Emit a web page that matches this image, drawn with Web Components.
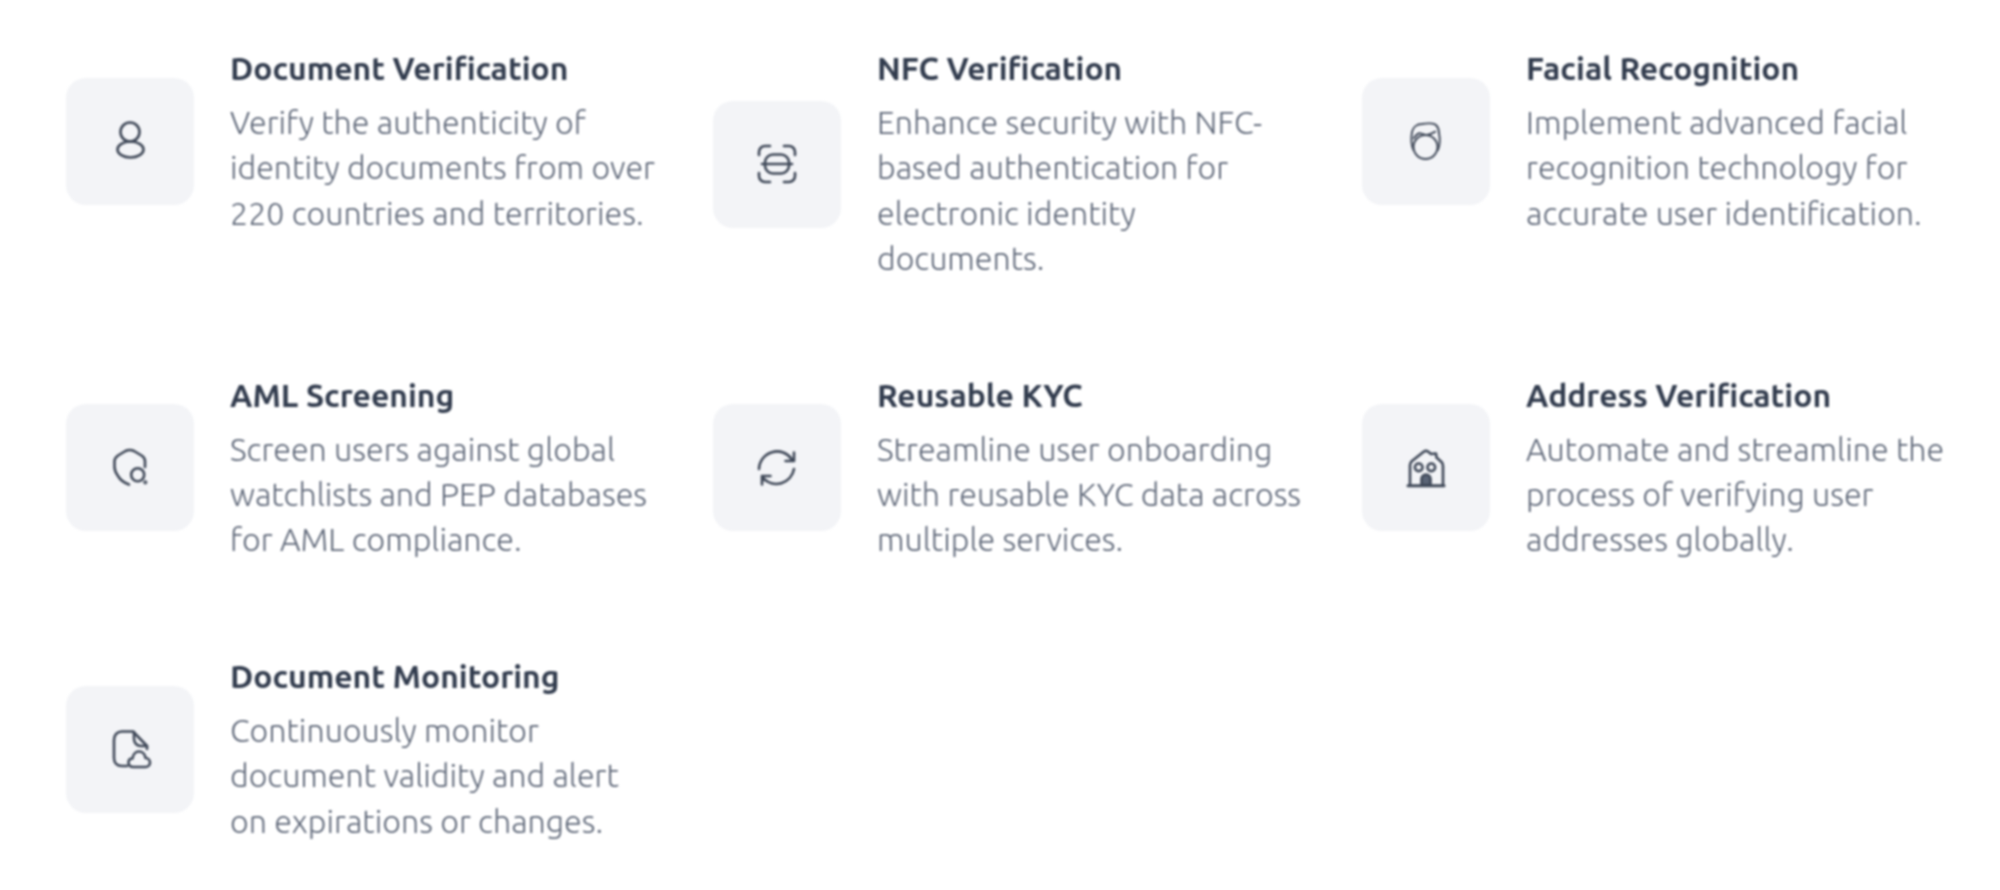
<!DOCTYPE html>
<html>
<head>
<meta charset="utf-8">
<title>Features</title>
<style>
  body { margin: 0; background: #fff; font-family: "Ubuntu", "Noto Sans", sans-serif; }
</style>
</head>
<body>
<feature-grid>
  <feature-card heading="Document Verification">
    <svg slot="icon" viewBox="0 0 48 48"><circle cx="24" cy="15" r="9.500"/><ellipse cx="24.500" cy="32.500" rx="13" ry="8"/></svg>
    Verify the authenticity of<br>identity documents from over<br>220 countries and territories.
  </feature-card>
  <feature-card heading="NFC Verification">
    <svg slot="icon" viewBox="0 0 48 48"><path d="M6 15v-3a6 6 0 0 1 6-6h5M31 6h5a6 6 0 0 1 6 6v3M42 33v3a6 6 0 0 1-6 6h-5M17 42h-5a6 6 0 0 1-6-6v-3"/><rect x="12" y="14.500" width="24" height="19" rx="8"/><path d="M9 24h30"/></svg>
    Enhance security with NFC-<br>based authentication for<br>electronic identity<br>documents.
  </feature-card>
  <feature-card heading="Facial Recognition">
    <svg slot="icon" viewBox="0 0 48 48" class="thin"><circle cx="23.500" cy="30" r="12"/><path d="M11.500 33C9 28 9 21 10 15 11 10 15 7 20 7c5-1 12-1 14 1 2 2 3 5 3 8 1 5 1 12-1 17"/><path d="M11.700 21.300C14 18 16 16 18.300 16.300 21 17 23 18.500 25 18 28 17.500 31 16 33.300 14.700"/></svg>
    Implement advanced facial<br>recognition technology for<br>accurate user identification.
  </feature-card>
  <feature-card heading="AML Screening">
    <svg slot="icon" viewBox="0 0 48 48"><path d="M23 40.500C19 39 14 35.500 12 32 9.500 28.500 8.500 26 8.500 23v-6c0-3 1.500-4 3.500-5.500l7.500-4.500c3-1.500 5.500-1.500 8.500 0l7.500 4.500c2.500 1.500 3.500 3 3.500 5.500v6"/><circle cx="31.700" cy="30.700" r="6.500"/><circle cx="39.300" cy="38.300" r=".8"/></svg>
    Screen users against global<br>watchlists and PEP databases<br>for AML compliance.
  </feature-card>
  <feature-card heading="Reusable KYC">
    <svg slot="icon" viewBox="0 0 48 48"><path d="M6 25A18 18 0 0 1 39 15.500L41 17M41 8.500V17H32.500"/><path d="M41 25A18 18 0 0 1 10 34L9 32M9 40.500V32H17.500"/></svg>
    Streamline user onboarding<br>with reusable KYC data across<br>multiple services.
  </feature-card>
  <feature-card heading="Address Verification">
    <svg slot="icon" viewBox="0 0 48 48"><path d="M8 41V21c0-2 1-3 2-4L22 7.500c1.500-1 2.500-1 4 0l3 2.500 5-.5 .5 4 5 4.500c1 1 1.500 2 1.500 4V41"/><path d="M6 41.700h36" stroke-width="3"/><circle cx="16.700" cy="23.300" r="3.800"/><circle cx="29.300" cy="23.300" r="3.800"/><path d="M19.500 41V35a4.500 4.500 0 0 1 9 0V41Z" fill="#5a6476"/></svg>
    Automate and streamline the<br>process of verifying user<br>addresses globally.
  </feature-card>
  <feature-card heading="Document Monitoring">
    <svg slot="icon" viewBox="0 0 48 48"><path d="M21 41h-5c-5 0-8-3-8-8V15c0-5 3-8.500 8-8.500h11L41 21v3"/><path d="M28 7v7c0 4 3 7 7 7h6"/><path d="M27.500 42c-3 0-5-1.500-5-4.500s2-4 4-4c.5-4 3-7 6.500-7 3.500 0 6 3 6.500 6.500 2.500 0 4.500 2 4.500 4.500s-2 4.500-4.500 4.500z"/></svg>
    Continuously monitor<br>document validity and alert<br>on expirations or changes.
  </feature-card>
</feature-grid>
<script>
  const gridTemplate = document.createElement( "template" );
  gridTemplate.innerHTML = `
    <style>
      :host {
        display: grid;
        grid-template-columns: 647px 649px 600px;
        row-gap: 93px;
        align-items: start;
        padding: 48px 0 0 66px;
      }
    </style>
    <slot></slot>
  `;

  class FeatureGrid extends HTMLElement {
    constructor() {
      super();
      this.attachShadow( { mode: "open" } );
      this.shadowRoot.append( gridTemplate.content.cloneNode( true ) );
    }
  }
  customElements.define( "feature-grid", FeatureGrid );

  const cardTemplate = document.createElement( "template" );
  cardTemplate.innerHTML = `
    <style>
      :host {
        display: flex;
        align-items: center;
        gap: 36px;
        filter: blur( .8px );
      }
      .icon {
        flex: none;
        display: grid;
        place-items: center;
        width: 128px;
        height: 127px;
        margin-bottom: 1.5px;
        border-radius: 20px;
        background: #f3f4f7;
      }
      ::slotted( svg ) {
        width: 48px;
        height: 48px;
        fill: none;
        stroke: #3f4858;
        stroke-width: 2.6;
        stroke-linecap: round;
        stroke-linejoin: round;
      }
      ::slotted( svg.thin ) {
        stroke-width: 1.9;
      }
      h3 {
        margin: 0 0 12px;
        font-size: 31.9px;
        line-height: 40px;
        font-weight: 600;
        color: #323c4e;
      }
      p {
        margin: 0;
        font-size: 32.2px;
        line-height: 45.4px;
        font-weight: 300;
        color: #5d6677;
      }
    </style>
    <div class="icon"><slot name="icon"></slot></div>
    <div>
      <h3></h3>
      <p><slot></slot></p>
    </div>
  `;

  class FeatureCard extends HTMLElement {
    constructor() {
      super();
      this.attachShadow( { mode: "open" } );
      this.shadowRoot.append( cardTemplate.content.cloneNode( true ) );
      this.shadowRoot.querySelector( "h3" ).textContent = this.getAttribute( "heading" );
    }
  }
  customElements.define( "feature-card", FeatureCard );
</script>
</body>
</html>
